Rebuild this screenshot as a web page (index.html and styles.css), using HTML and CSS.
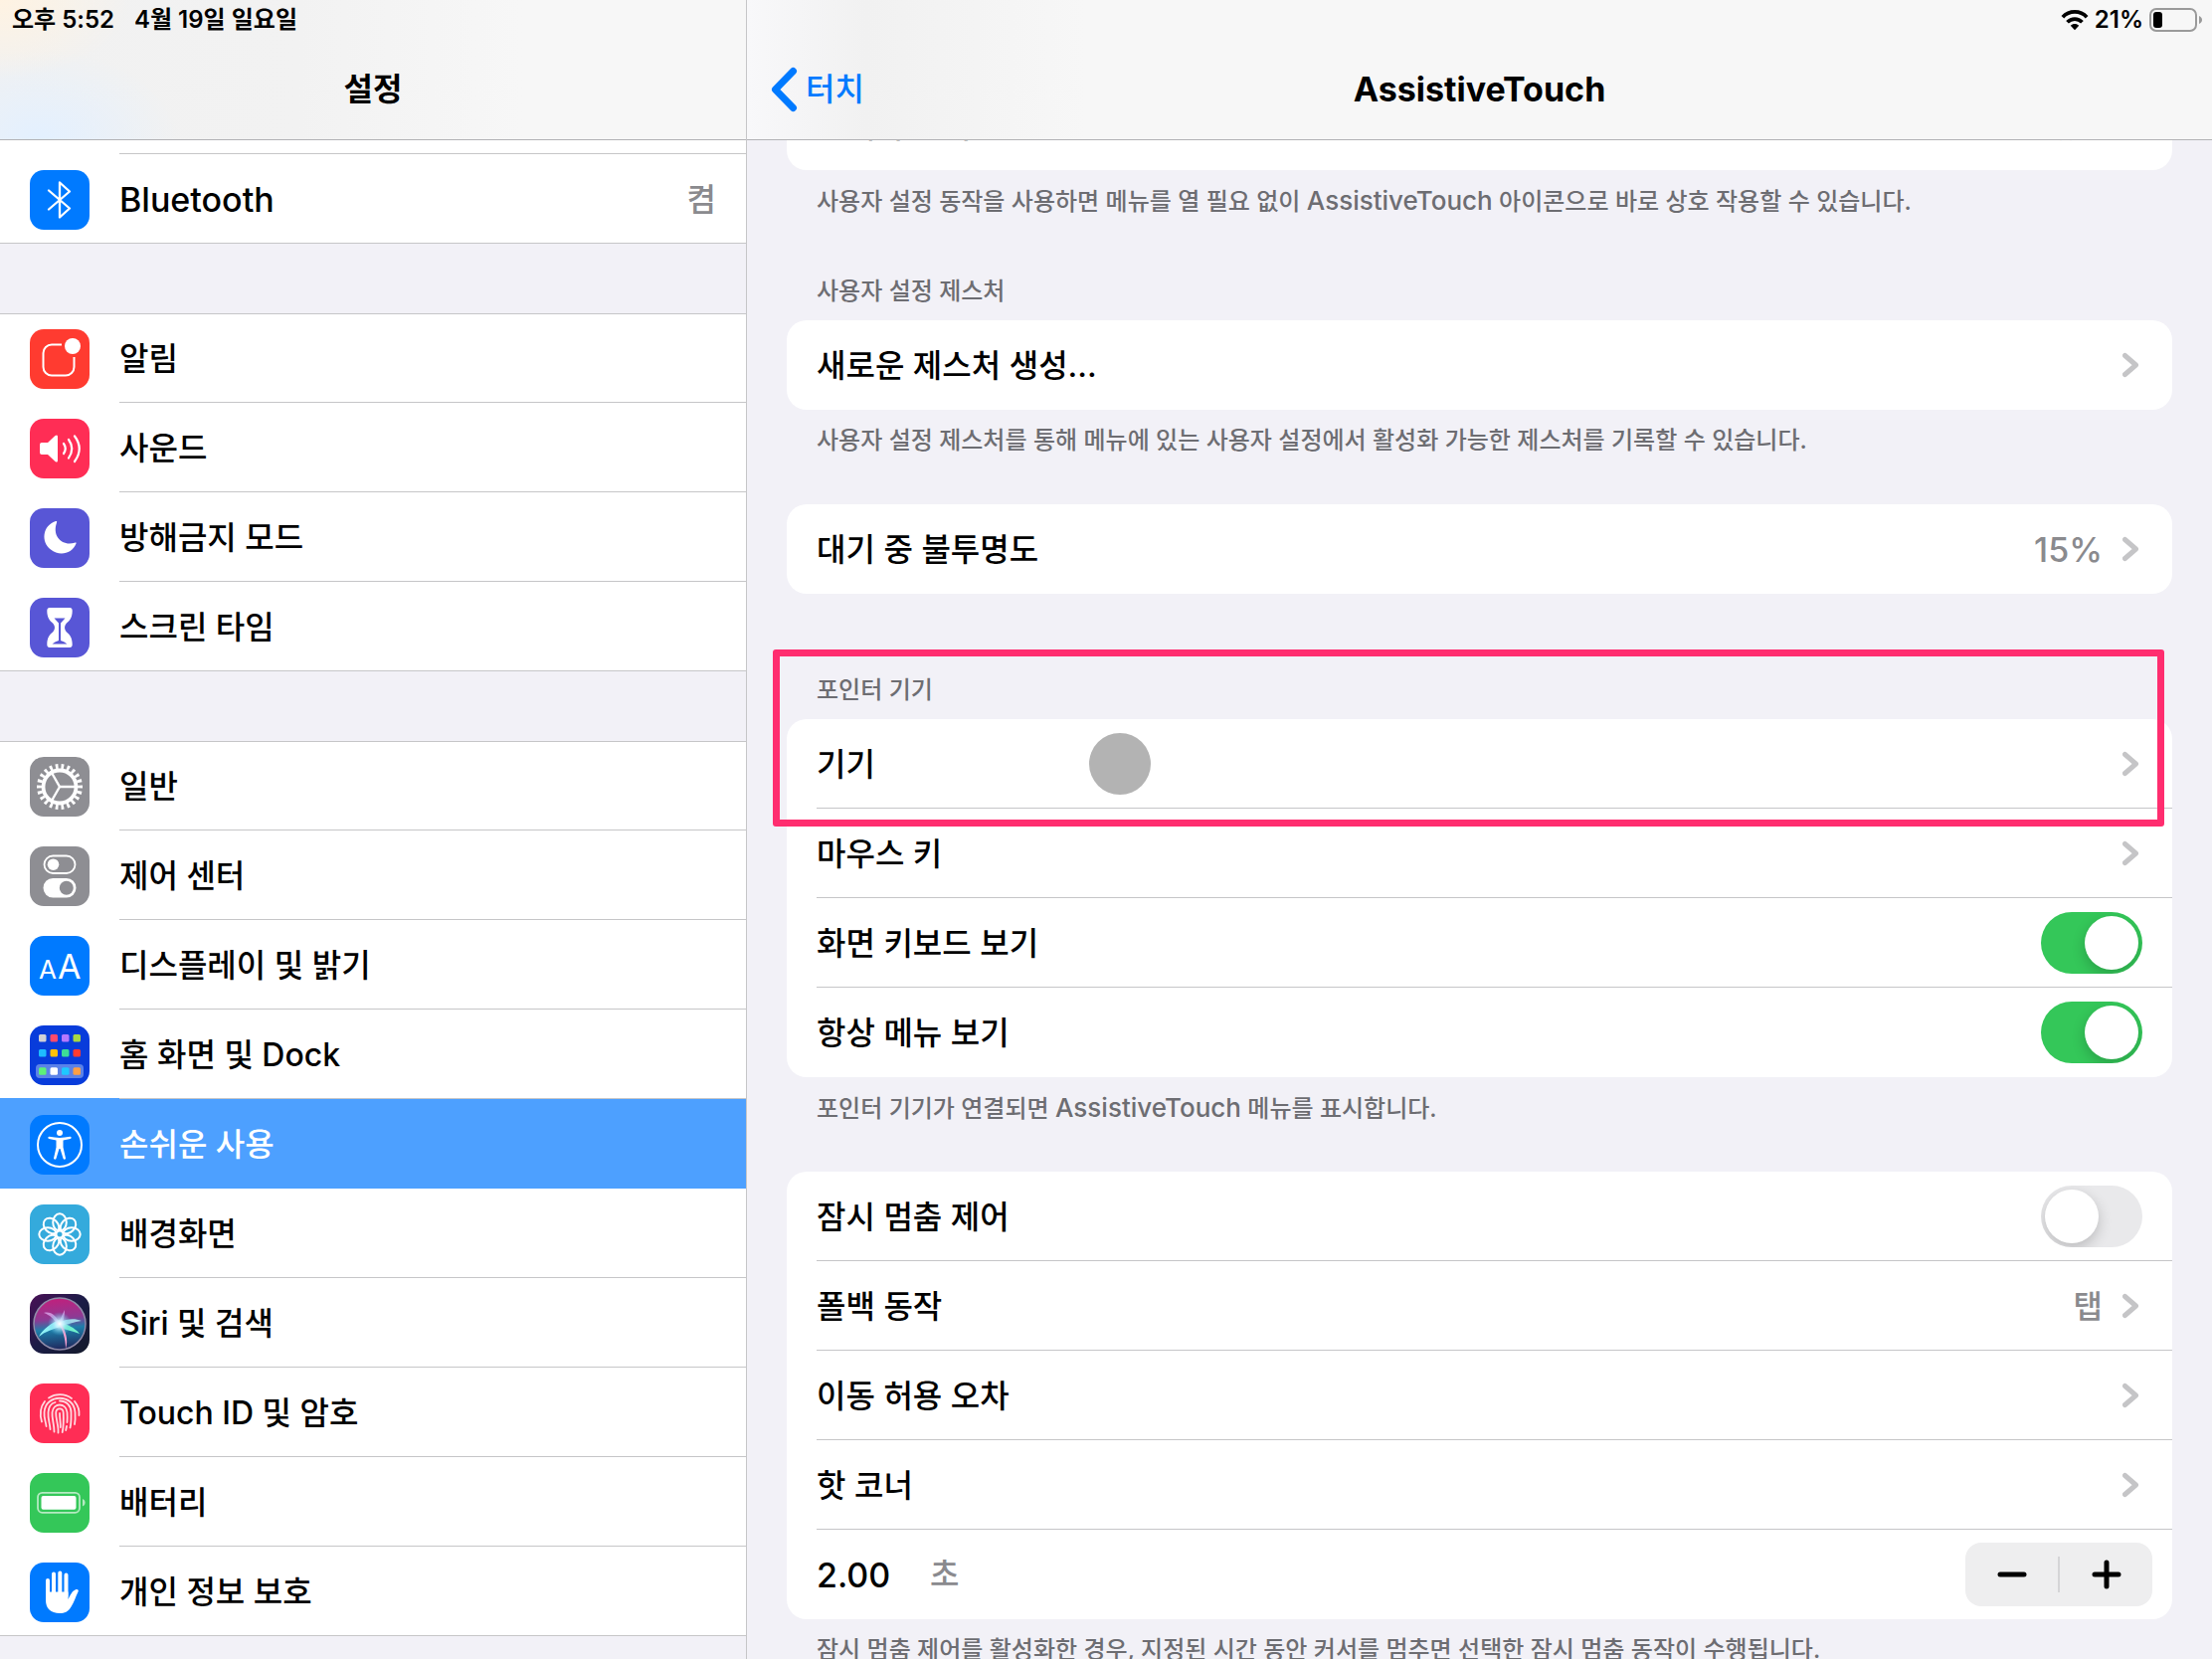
FILE: index.html
```html
<!DOCTYPE html>
<html lang="ko">
<head>
  <meta charset="UTF-8">
  <meta name="viewport" content="width=device-width, initial-scale=1.0">
  <title>설정</title>
  <link rel="stylesheet" href="styles.css">
</head>
<body>
  <!-- Shared shapes -->
  <svg class="defs" width="0" height="0" aria-hidden="true">
    <symbol id="chevron" viewBox="0 0 20 26">
      <path d="M2.500 3.500l11 9.500-11 9.500" fill="none" stroke="#c5c5c7" stroke-width="5" stroke-linecap="round" stroke-linejoin="round"/>
    </symbol>
    <symbol id="petal" viewBox="0 0 60 60">
      <ellipse cx="30" cy="18" rx="6.8" ry="8.7" fill="none" stroke="#fff" stroke-width="2"/>
    </symbol>
  </svg>

  <!-- Sidebar -->
  <aside class="sidebar">
    <header class="bar bar-left">
      <div class="status">
        <span>오후 5:52</span>
        <span>4월 19일 일요일</span>
      </div>
      <div class="nav">
        <h1>설정</h1>
      </div>
    </header>

    <nav class="menu">
      <ul class="group">
        <li><a class="item" href="#">
          <svg class="icon blue" viewBox="0 0 60 60"></svg>
          <span class="label">Wi-Fi</span>
        </a></li>
        <li><a class="item" href="#">
          <svg class="icon blue" viewBox="0 0 60 60">
            <path d="M19 20.500L40 38.500 30 47.500V12.500L40 21.500 19 39.500" fill="none" stroke="#fff" stroke-width="2.300" stroke-linejoin="round" stroke-linecap="round"/>
          </svg>
          <span class="label"><span class="latin">Bluetooth</span> <span class="state">켬</span></span>
        </a></li>
      </ul>

      <ul class="group">
        <li><a class="item" href="#">
          <svg class="icon red" viewBox="0 0 60 60">
            <path d="M32 15.500H22a8.500 8.500 0 0 0-8.500 8.500v14a8.500 8.500 0 0 0 8.500 8.500h14a8.500 8.500 0 0 0 8.500-8.500V28" fill="none" stroke="#fff" stroke-width="2"/>
            <circle cx="43" cy="17" r="8" fill="#fff"/>
          </svg>
          <span class="label">알림</span>
        </a></li>
        <li><a class="item" href="#">
          <svg class="icon pink" viewBox="0 0 60 60">
            <path d="M10 26q0-2 2-2h6l7.500-7q2.500-1.500 2.500 1v24q0 2.500-2.500 1L18 36h-6q-2 0-2-2z" fill="#fff"/>
            <path d="M34 25q3.500 5 0 10M39 21q6.500 9 0 18.500M45 17.500q9.500 12.500 0 25.500" fill="none" stroke="#fff" stroke-width="2.200" stroke-linecap="round"/>
          </svg>
          <span class="label">사운드</span>
        </a></li>
        <li><a class="item" href="#">
          <svg class="icon purple" viewBox="0 0 60 60">
            <path d="M26 13C12.500 17.500 11 34 21 41.500 29.500 48.500 42.500 46 46.500 35.500c.5-1.300-.5-1.300-1.500-.8C33 38.500 22 28.500 27 14.500c.4-1 .2-1.800-1-1.500z" fill="#fff"/>
          </svg>
          <span class="label">방해금지 모드</span>
        </a></li>
        <li><a class="item" href="#">
          <svg class="icon purple" viewBox="0 0 60 60">
            <path d="M20 10h20q2.700 0 2.700 3C42.700 20 40 23 36.500 26q-3 4 0 8c3.500 3 6.200 6 6.200 13q0 3-2.700 3H20q-2.700 0-2.700-3c0-7 2.700-10 6.200-13q3-4 0-8C20 23 17.300 20 17.300 13q0-3 2.700-3z" fill="#fff"/>
            <path d="M24.500 20.500h11L31 25.500V43q4 1 6.500 3.500h-15Q25 44 29 43V25.500z" fill="#5856d6"/>
          </svg>
          <span class="label">스크린 타임</span>
        </a></li>
      </ul>

      <ul class="group">
        <li><a class="item" href="#">
          <svg class="icon gray" viewBox="0 0 60 60" fill="none" stroke="#fff">
            <circle cx="30" cy="30" r="20.500" stroke-width="5" pathLength="66" stroke-dasharray="1.400 1.600" stroke-dashoffset=".7"/>
            <circle cx="30" cy="30" r="16.500" stroke-width="3.800"/>
            <path d="M46 30H30L22 16M30 30l-8 14" stroke-width="2.400"/>
          </svg>
          <span class="label">일반</span>
        </a></li>
        <li><a class="item" href="#">
          <svg class="icon gray" viewBox="0 0 60 60">
            <rect x="14.500" y="9.500" width="31" height="17.500" rx="8.700" fill="none" stroke="#fff" stroke-width="1.800"/>
            <circle cx="23.500" cy="18.200" r="5.800" fill="#fff"/>
            <rect x="13.500" y="32" width="33" height="19.500" rx="9.700" fill="#fff"/>
            <circle cx="36.800" cy="41.800" r="7" fill="#8e8e93"/>
          </svg>
          <span class="label">제어 센터</span>
        </a></li>
        <li><a class="item" href="#">
          <svg class="icon blue" viewBox="0 0 60 60">
            <text class="aa" x="9" y="43" font-size="26">A</text>
            <text class="aa" x="28" y="43" font-size="34">A</text>
          </svg>
          <span class="label">디스플레이 및 밝기</span>
        </a></li>
        <li><a class="item" href="#">
          <svg class="icon navy" viewBox="0 0 60 60">
            <rect x="6" y="39" width="48" height="14" rx="4" fill="#5b82e8"/>
            <g>
              <rect x="9" y="9" width="7.500" height="7.500" rx="1.500" fill="#d1d1d6"/>
              <rect x="20.500" y="9" width="7.500" height="7.500" rx="1.500" fill="#ff4a6b"/>
              <rect x="32" y="9" width="7.500" height="7.500" rx="1.500" fill="#b678ff"/>
              <rect x="43.500" y="9" width="7.500" height="7.500" rx="1.500" fill="#a8d843"/>
              <rect x="9" y="24" width="7.500" height="7.500" rx="1.500" fill="#1ebcff"/>
              <rect x="20.500" y="24" width="7.500" height="7.500" rx="1.500" fill="#ffc20a"/>
              <rect x="32" y="24" width="7.500" height="7.500" rx="1.500" fill="#3ddc97"/>
              <rect x="43.500" y="24" width="7.500" height="7.500" rx="1.500" fill="#ff3b30"/>
              <rect x="9" y="42.300" width="7.500" height="7.500" rx="1.500" fill="#5df078"/>
              <rect x="20.500" y="42.300" width="7.500" height="7.500" rx="1.500" fill="#fff"/>
              <rect x="32" y="42.300" width="7.500" height="7.500" rx="1.500" fill="#1ec8ff"/>
              <rect x="43.500" y="42.300" width="7.500" height="7.500" rx="1.500" fill="#ff9f45"/>
            </g>
          </svg>
          <span class="label">홈 화면 및 Dock</span>
        </a></li>
        <li><a class="item selected" href="#" aria-current="page">
          <svg class="icon blue" viewBox="0 0 60 60">
            <circle cx="30" cy="30" r="22" fill="none" stroke="#fff" stroke-width="2"/>
            <circle cx="30" cy="18" r="3" fill="#fff"/>
            <path d="M19.500 21.800c7 1.500 14 1.500 21 0 1.500 0 1.500 2 .3 2.300l-7.300 1.300v7l2.500 11.200c0 1.500-2 1.500-2.400.4L30.500 34h-1L26.400 44c-.4 1.100-2.400 1.100-2.400-.4l2.500-11.200v-7l-7.300-1.300c-1.200-.3-1.200-2.300.3-2.300z" fill="#fff"/>
          </svg>
          <span class="label">손쉬운 사용</span>
        </a></li>
        <li><a class="item" href="#">
          <svg class="icon cyan" viewBox="0 0 60 60">
            <use href="#petal"/>
            <use href="#petal" transform="rotate(45 30 30)"/>
            <use href="#petal" transform="rotate(90 30 30)"/>
            <use href="#petal" transform="rotate(135 30 30)"/>
            <use href="#petal" transform="rotate(180 30 30)"/>
            <use href="#petal" transform="rotate(225 30 30)"/>
            <use href="#petal" transform="rotate(270 30 30)"/>
            <use href="#petal" transform="rotate(315 30 30)"/>
          </svg>
          <span class="label">배경화면</span>
        </a></li>
        <li><a class="item" href="#">
          <svg class="icon" viewBox="0 0 60 60">
            <defs>
              <linearGradient id="siri-bg" x1="0" y1="0" x2="1" y2="1">
                <stop offset="0" stop-color="#4a1157"/>
                <stop offset=".5" stop-color="#1b1c46"/>
                <stop offset="1" stop-color="#131a2a"/>
              </linearGradient>
              <linearGradient id="siri-orb" x1=".4" y1="0" x2=".5" y2="1">
                <stop offset="0" stop-color="#c21f7c"/>
                <stop offset=".4" stop-color="#8d3a94"/>
                <stop offset=".6" stop-color="#1d7faa"/>
                <stop offset="1" stop-color="#20265c"/>
              </linearGradient>
              <radialGradient id="siri-glow">
                <stop offset="0" stop-color="#fff"/>
                <stop offset=".35" stop-color="#c8f2ff" stop-opacity=".8"/>
                <stop offset="1" stop-color="#4fc3e8" stop-opacity="0"/>
              </radialGradient>
            </defs>
            <rect width="60" height="60" fill="url(#siri-bg)"/>
            <circle cx="30" cy="30" r="26" fill="url(#siri-orb)" stroke="#8f8aa8" stroke-width="1.500"/>
            <path d="M30 26C22 29 13 35 9 43c6-5 14-8 22-10z" fill="#8ff0f4"/>
            <path d="M29 28c7 2 17 6 21 12-8-3-15-4-21-7z" fill="#6ff0cc"/>
            <path d="M28 29c5 6 8 16 8 26 3-8 0-19-5-26z" fill="#f59fd0"/>
            <path d="M30 30C27 22 21 17 14 19c6 2 10 6 14 12zM29 30c2-6 4-10 6-14 0 6-1 10-3 14z" fill="#d9a5ea" opacity=".8"/>
            <path d="M30 28c7-3 15-4 22-1-7 1-15 4-21 5z" fill="#a8e4f0" opacity=".9"/>
            <circle cx="30" cy="30" r="12" fill="url(#siri-glow)"/>
          </svg>
          <span class="label">Siri 및 검색</span>
        </a></li>
        <li><a class="item" href="#">
          <svg class="icon pink" viewBox="0 0 60 60" fill="none" stroke="#ffd9e0" stroke-width="1.800" stroke-linecap="round">
            <path d="M19 14.500C26 10 35 10 42 15"/>
            <path d="M12 38.500C9.500 30 11 23 15 18M45 18c4 5 5 9 4.500 14"/>
            <path d="M16.500 43C16 38 14 35 14.500 29 15.500 10 44.500 10 45.500 29c.3 5 .3 8-.5 12"/>
            <path d="M20.500 46C20 39 18 36 18.500 29c.3-5 3-9 7-10M30 17.500c7 0 11.500 5 11.500 11.500 0 6 .3 11-1 15.500"/>
            <path d="M24.500 48.500C24.500 40 22 36 22.500 29 23.500 19 36.500 19 37.500 29c.3 4 .3 7 0 10M37 43l-.8 4"/>
            <path d="M28.500 49.500C29 42 26 36 26.200 29.500c.3-5.500 7.300-5.500 7.500 0 .3 6 .3 13-1 19.500"/>
            <path d="M30 30c0 6 1 9 .8 14"/>
          </svg>
          <span class="label">Touch ID 및 암호</span>
        </a></li>
        <li><a class="item" href="#">
          <svg class="icon green" viewBox="0 0 60 60">
            <rect x="8" y="19.800" width="42" height="20" rx="4.500" fill="none" stroke="#b5eac2" stroke-width="1.800"/>
            <rect x="11.500" y="23" width="35" height="13.700" rx="2" fill="#fff"/>
            <path d="M53 26c3.500 1.500 3.500 6 0 7.500z" fill="#b5eac2"/>
          </svg>
          <span class="label">배터리</span>
        </a></li>
        <li><a class="item" href="#">
          <svg class="icon blue" viewBox="0 0 60 60">
            <path d="M18 18v18M24 11.500V34M30.300 10.500V34M36.500 12.500V34" stroke="#fff" stroke-width="4" stroke-linecap="round"/>
            <path d="M16 29.500h22.500V37c2-4 4-8.500 7.500-9.800 2-.7 3.500.3 2.500 2.300-2.500 5-4 10.500-7 15-3 5-6.500 6.500-11.500 6.500-9 0-14-5-14-13z" fill="#fff"/>
          </svg>
          <span class="label">개인 정보 보호</span>
        </a></li>
      </ul>
    </nav>
  </aside>

  <!-- Detail pane -->
  <main class="detail">
    <header class="bar bar-right">
      <div class="status status-right">
        <svg width="28" height="22" viewBox="0 0 30 22" fill="none" stroke="#000" stroke-width="4">
          <path d="M2 8c7-7.500 19-7.500 26 0M7 13.500c4.500-4.700 11.500-4.700 16 0"/>
          <path d="M15 22l-4.500-4.800c2.500-2.700 6.500-2.700 9 0z" fill="#000" stroke="none"/>
        </svg>
        <span>21%</span>
        <svg width="54" height="24" viewBox="0 0 54 24">
          <rect x="1" y="1" width="46" height="22" rx="6" fill="none" stroke="#9a9a9a" stroke-width="2"/>
          <rect x="4" y="4" width="9" height="16" rx="3"/>
          <path d="M50 8c4 1.500 4 6.500 0 8z" fill="#9a9a9a"/>
        </svg>
      </div>
      <div class="nav">
        <a class="back" href="#">
          <svg width="28" height="46" viewBox="0 0 28 46"><path d="M22.500 4.500L4.500 23l18 18.500" fill="none" stroke="#007aff" stroke-width="7" stroke-linecap="round" stroke-linejoin="round"/></svg>
          터치
        </a>
        <h2 class="latin">AssistiveTouch</h2>
      </div>
    </header>

    <div class="content">
      <section>
        <div class="card">
          <a class="row" href="#">길게 누르기 <span class="value">없음</span><svg class="chev"><use href="#chevron"/></svg></a>
        </div>
        <p class="note">사용자 설정 동작을 사용하면 메뉴를 열 필요 없이 <span class="latin">AssistiveTouch</span> 아이콘으로 바로 상호 작용할 수 있습니다.</p>
      </section>

      <section>
        <h3>사용자 설정 제스처</h3>
        <div class="card">
          <a class="row" href="#">새로운 제스처 생성... <svg class="chev"><use href="#chevron"/></svg></a>
        </div>
        <p class="note">사용자 설정 제스처를 통해 메뉴에 있는 사용자 설정에서 활성화 가능한 제스처를 기록할 수 있습니다.</p>
      </section>

      <section class="no-note">
        <div class="card">
          <a class="row" href="#">대기 중 불투명도 <span class="value latin">15%</span><svg class="chev"><use href="#chevron"/></svg></a>
        </div>
      </section>

      <section class="pointer-devices">
        <h3>포인터 기기</h3>
        <div class="card">
          <a class="row" href="#">기기 <svg class="chev"><use href="#chevron"/></svg></a>
          <a class="row" href="#">마우스 키 <svg class="chev"><use href="#chevron"/></svg></a>
          <label class="row">화면 키보드 보기 <input class="switch" type="checkbox" checked></label>
          <label class="row">항상 메뉴 보기 <input class="switch" type="checkbox" checked></label>
        </div>
        <p class="note">포인터 기기가 연결되면 <span class="latin">AssistiveTouch</span> 메뉴를 표시합니다.</p>
        <div class="touch-dot"></div>
        <div class="highlight"></div>
      </section>

      <section>
        <div class="card">
          <label class="row">잠시 멈춤 제어 <input class="switch" type="checkbox"></label>
          <a class="row" href="#">폴백 동작 <span class="value">탭</span><svg class="chev"><use href="#chevron"/></svg></a>
          <a class="row" href="#">이동 허용 오차 <svg class="chev"><use href="#chevron"/></svg></a>
          <a class="row" href="#">핫 코너 <svg class="chev"><use href="#chevron"/></svg></a>
          <div class="row row-stepper">
            <input class="seconds latin" id="seconds" type="text" value="2.00">
            <label class="unit" for="seconds">초</label>
            <div class="stepper">
              <button type="button" aria-label="감소">
                <svg width="30" height="30" viewBox="0 0 30 30"><path d="M3 15h24" stroke="#000" stroke-width="5" stroke-linecap="round"/></svg>
              </button>
              <button type="button" aria-label="증가">
                <svg width="30" height="30" viewBox="0 0 30 30"><path d="M3 15h24M15 3v24" stroke="#000" stroke-width="5" stroke-linecap="round"/></svg>
              </button>
            </div>
          </div>
        </div>
        <p class="note">잠시 멈춤 제어를 활성화한 경우, 지정된 시간 동안 커서를 멈추면 선택한 잠시 멈춤 동작이 수행됩니다.</p>
      </section>
    </div>
  </main>
</body>
</html>
```

FILE: styles.css
```css
/* Global Styles */
* {
  box-sizing: border-box;
}

body {
  margin: 0;
  height: 100vh;
  overflow: hidden;
  display: grid;
  grid-template-columns: 751px 1fr;
  font-family: Inter, "Noto Sans CJK KR", sans-serif;
  font-size: 32px;
  font-weight: 500;
  line-height: 40px;
  background-color: #f2f1f7;
  color: #000;
}

a {
  color: inherit;
  text-decoration: none;
}

h1, h2, h3, p, ul {
  margin: 0;
  padding: 0;
}

ul {
  list-style: none;
}

.defs {
  position: absolute;
}

/* Top bars */
.bar {
  position: relative;
  z-index: 1;
  height: 141px;
  flex: none;
  background-color: #f7f7f7;
  border-bottom: 1px solid #b2b2b5;
}

.bar-left {
  background-image:
    radial-gradient(ellipse 130px 80px at 0 0, #fff3e2, transparent),
    radial-gradient(ellipse 140px 90px at 40px 140px, #e3f0ff, transparent),
    linear-gradient(90deg, #f1f1f1, #f2f2f2 40%, #f7f7f7 70%);
}

.bar-right {
  background-image: linear-gradient(90deg, #f8f8fa, #f1f1f1 120px, #f7f7f7 340px);
}

.status {
  display: flex;
  align-items: center;
  gap: 20px;
  height: 40px;
  padding: 0 12px;
  font-size: 24px;
  font-weight: 600;
}

.status-right {
  justify-content: flex-end;
  gap: 6px;
  padding-right: 9px;
}

.nav {
  display: grid;
  grid-template-columns: 1fr auto 1fr;
  align-items: center;
  height: 100px;
}

.nav h1,
.nav h2 {
  grid-column: 2;
  font-size: 32px;
  font-weight: 700;
}

.back {
  display: flex;
  align-items: center;
  gap: 7px;
  padding-left: 24px;
  color: #007aff;
}

/* Latin text runs a size larger than Hangul */
.latin,
.nav .latin {
  font-size: 34px;
}

/* Sidebar */
.sidebar {
  display: flex;
  flex-direction: column;
  min-height: 0;
  border-right: 1px solid #c6c6c8;
}

/* scrolled position: the first row sits under the bar */
.menu {
  margin-top: -76px;
}

.group {
  margin-bottom: 70px;
}

.group li:first-child .item {
  border-top: 1px solid #c6c6c8;
}

.group li:last-child .item {
  border-bottom: 1px solid #c6c6c8;
}

.group li:last-child .label {
  border-bottom: 0;
}

.item {
  display: flex;
  height: 90px;
  padding-left: 30px;
  gap: 30px;
  background-color: #fff;
}

.icon {
  flex: none;
  width: 60px;
  height: 60px;
  margin-top: 16px;
  border-radius: 14px;
}

.group li:first-child .icon {
  margin-top: 15px;
}

.label {
  flex: 1;
  display: flex;
  align-items: center;
  justify-content: space-between;
  padding-top: 2px;
  padding-right: 30px;
  border-bottom: 1px solid #c6c6c8;
}

.state,
.value {
  color: #8a8a8e;
}

.selected {
  background-color: #4da0ff;
  box-shadow: 0 -1px 0 #4da0ff;
  color: #fff;
}

.selected .label {
  border-color: #4da0ff;
}

/* Icon colours */
.blue { background-color: #007aff; }
.red { background-color: #ff3b30; }
.pink { background-color: #ff2d55; }
.purple { background-color: #5856d6; }
.gray { background-color: #8e8e93; }
.navy { background-color: #083cdb; }
.cyan { background-color: #34aadc; }
.green { background-color: #34c759; }

.aa {
  fill: #fff;
  font-weight: 400;
}

/* Detail pane */
.detail {
  display: flex;
  flex-direction: column;
  min-width: 0;
  min-height: 0;
}

.content {
  margin-top: -60px;
  padding: 0 40px;
}

.content h3,
.note {
  padding: 11px 30px 0;
  font-size: 24px;
  font-weight: 500;
  color: #6d6d72;
}

.content h3 {
  height: 56px;
  padding-top: 7px;
}

.note {
  height: 95px;
}

.note .latin {
  font-size: 26px;
}

.no-note {
  margin-bottom: 70px;
}

.card {
  padding-left: 30px;
  border-radius: 20px;
  background-color: #fff;
}

.row {
  display: flex;
  align-items: center;
  justify-content: space-between;
  height: 90px;
  padding-top: 2px;
  padding-right: 30px;
  border-bottom: 1px solid #c6c6c8;
}

.row:last-child {
  border-bottom: 0;
}

.value {
  margin-left: auto;
  margin-right: 20px;
}

.chev {
  width: 20px;
  height: 26px;
  margin-bottom: 2px;
}

/* Switch */
.switch {
  appearance: none;
  display: flex;
  width: 102px;
  height: 62px;
  margin: 0 0 2px;
  padding: 4px;
  border-radius: 31px;
  background-color: #e9e9eb;
  overflow: hidden;
}

.switch::before {
  content: "";
  width: 54px;
  height: 54px;
  border-radius: 50%;
  background-color: #fff;
  box-shadow: 0 5px 14px rgba(0, 0, 0, 0.2);
}

.switch:checked {
  justify-content: flex-end;
  background-color: #34c759;
}

/* Stepper */
.row-stepper {
  justify-content: flex-start;
  padding-top: 0;
  padding-right: 20px;
}

.seconds {
  width: 114px;
  height: 40px;
  padding: 0;
  border: 0;
  font-family: inherit;
  font-weight: 500;
}

.unit {
  color: #8a8a8e;
}

.stepper {
  display: flex;
  align-items: center;
  width: 188px;
  height: 64px;
  margin-left: auto;
  border-radius: 16px;
  background-color: #eeeeef;
}

.stepper button {
  flex: 1;
  display: flex;
  align-items: center;
  justify-content: center;
  height: 36px;
  padding: 0;
  border: 0;
  background: none;
}

.stepper button + button {
  border-left: 2px solid #d5d5d7;
}

/* Pointer mark and frame over the list */
.pointer-devices {
  position: relative;
}

.touch-dot {
  position: absolute;
  top: 70px;
  left: 304px;
  width: 62px;
  height: 62px;
  border-radius: 50%;
  background-color: #b3b3b3;
}

.highlight {
  position: absolute;
  top: -14px;
  left: -14px;
  right: 8px;
  height: 178px;
  border: 7px solid #ff2d6f;
  border-radius: 3px;
}
```
